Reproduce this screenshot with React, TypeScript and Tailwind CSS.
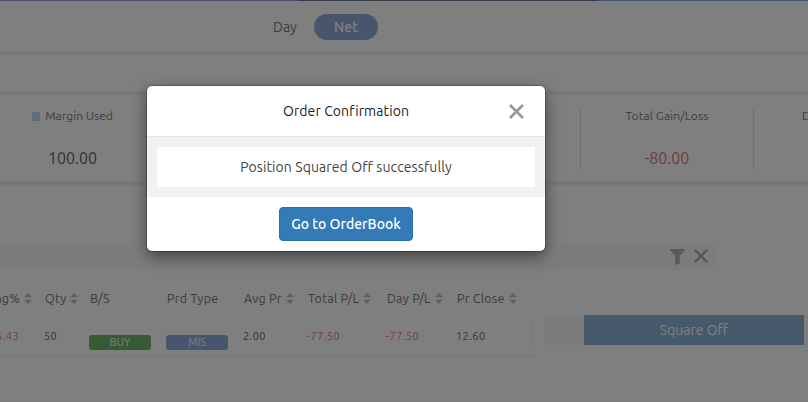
import clsx from "clsx";

type Column = {
  label: string;
  value: string;
  sortable?: boolean;
  tone?: "loss" | "buy" | "product";
};

const columns: Column[] = [
  { label: "Chng%", value: "-85.43", sortable: true, tone: "loss" },
  { label: "Qty", value: "50", sortable: true },
  { label: "B/S", value: "BUY", tone: "buy" },
  { label: "Prd Type", value: "MIS", tone: "product" },
  { label: "Avg Pr", value: "2.00", sortable: true },
  { label: "Total P/L", value: "-77.50", sortable: true, tone: "loss" },
  { label: "Day P/L", value: "-77.50", sortable: true, tone: "loss" },
  { label: "Pr Close", value: "12.60", sortable: true },
];

const tableGrid = "grid grid-cols-[45px_45px_77px_77px_64px_79px_70px_78px]";

function SortIcon() {
  return (
    <svg width="8" height="11" viewBox="0 0 8 11" className="mt-px shrink-0 fill-[#bcbcbc]">
      <path d="M4 0 8 4.2H0z" />
      <path d="M4 11 0 6.8h8z" />
    </svg>
  );
}

function Cell({ column }: { column: Column }) {
  if (column.tone === "buy" || column.tone === "product") {
    return (
      <div
        className={clsx(
          "-ml-px mt-[12px] h-[15px] w-[62px] rounded-[3px] text-center text-[11px] leading-[15px] text-white",
          column.tone === "buy" ? "bg-[#6cb468]" : "bg-[#90acda]"
        )}
      >
        {column.value}
      </div>
    );
  }
  return (
    <div
      className={clsx(
        "-ml-px pt-[5px] text-[11px] leading-4 tracking-[0.4px]",
        column.tone === "loss" ? "text-[#e07a7a]" : "text-[#6a6a6a]"
      )}
    >
      {column.value}
    </div>
  );
}

function Positions() {
  return (
    <div className="flex h-[216px] pt-[57px]">
      <div className="w-[718px] shrink-0">
        <div className="flex h-7 items-center justify-end gap-[9px] rounded-r bg-[#f8f8f8] pr-2.5">
          <svg width="15" height="16" viewBox="0 0 15 16" className="mt-px fill-[#b4b4b4]">
            <path d="M0 0h15v1.2L9.8 6.8v7.4L5.2 16V6.8L0 1.2z" />
          </svg>
          <svg width="14" height="14" viewBox="0 0 14 14" className="stroke-[#a8a8a8]" strokeWidth="2.2" fill="none">
            <path d="M.8.8l12.4 12.4M13.2.8.8 13.2" />
          </svg>
        </div>
        <div className="flex">
          <div className="w-[535px] shrink-0">
            <div className={clsx(tableGrid, "h-[53px] pt-[18px]")}>
              {columns.map((column, i) => (
                <div key={column.label} className={clsx("flex h-5 items-center gap-1", i === 0 && "w-8 justify-end")}>
                  <span className="whitespace-nowrap text-[12.5px] tracking-[0.25px] text-[#777]">{column.label}</span>
                  {column.sortable && <SortIcon />}
                </div>
              ))}
            </div>
            <div className="flex h-[33px] border-b border-[#ececec]">
              <div className={clsx(tableGrid, "w-[531px] shrink-0")}>
                {columns.map((column, i) => (
                  <div key={column.label} className={clsx(i === 0 && "flex w-[19px] justify-end")}>
                    <Cell column={column} />
                  </div>
                ))}
              </div>
              <div className="h-[25px] w-px bg-[#ececec]" />
            </div>
          </div>
          <div className="ml-[9px] mt-[45px] flex h-[30px] w-[264px] shrink-0 bg-[#f8f8f8] pl-10">
            <button className="w-[220px] rounded-[1px] bg-[#8cb4d9] text-[14px] text-white">Square Off</button>
          </div>
        </div>
      </div>
    </div>
  );
}

function Summary() {
  return (
    <div className="flex h-[86px] overflow-hidden pt-3">
      <div className="w-[145px] shrink-0 pt-px text-center">
        <div className="flex items-center justify-center gap-[5px] text-[12px] leading-4 text-[#777]">
          <span className="h-[9px] w-2 bg-[#c0d7fb]" />
          Margin Used
        </div>
        <div className="mt-[24px] text-[16px] leading-5 text-[#666]">100.00</div>
      </div>
      <div className="ml-[435px] h-[62px] w-[174px] shrink-0 border-x border-[#ddd] pt-px text-center">
        <div className="text-[12px] leading-4 tracking-[0.1px] text-[#777]">Total Gain/Loss</div>
        <div className="mt-[24px] text-[16px] leading-5 text-[#e07a7a]">-80.00</div>
      </div>
      <div className="w-[174px] shrink-0 whitespace-nowrap pl-12 pt-px text-[12px] leading-4 text-[#777]">
        Day&apos;s Gain/Loss
      </div>
    </div>
  );
}

function OrderConfirmation() {
  return (
    <div className="h-[165px] w-[398px] overflow-hidden rounded-[5px] bg-white text-center">
      <div className="flex h-[51px] items-center border-b border-[#e5e5e5] pl-9">
        <h2 className="flex-1 text-[14px] tracking-[0.1px] text-[#222]">Order Confirmation</h2>
        <button className="mr-[21px] w-[15px]" aria-label="Close">
          <svg width="15" height="15" viewBox="0 0 15 15" className="stroke-[#999]" strokeWidth="2.8" fill="none">
            <path d="M1 1l13 13M14 1 1 14" />
          </svg>
        </button>
      </div>
      <div className="bg-[#f1f1f1] p-2.5">
        <p className="h-10 bg-white text-[14px] leading-10 tracking-[0.1px] text-[#444]">
          Position Squared Off successfully
        </p>
      </div>
      <div className="flex justify-center pt-2.5">
        <button className="h-[34px] w-[134px] rounded border border-[#2e6da4] bg-[#337ab7] text-[14px] font-medium text-white">
          Go to OrderBook
        </button>
      </div>
    </div>
  );
}

export default function App() {
  return (
    <div className="relative h-[402px] w-[808px] overflow-hidden bg-white font-['Ubuntu','Noto_Sans',sans-serif]">
      <div className="flex h-px">
        <div className="w-[298px] bg-[#8ca2cf]" />
        <div className="w-[300px] bg-[#66738c]" />
        <div className="flex-1 bg-[#86a9df]" />
      </div>
      <div className="flex h-[50px] items-center pl-[273px] pt-0.5">
        <span className="w-[41px] text-[14px] text-[#777]">Day</span>
        <span className="h-[26px] w-16 rounded-full bg-[#90acda] text-center text-[14px] font-medium leading-[26px] text-white">
          Net
        </span>
      </div>
      <div className="h-1 bg-[#f1f1f1]" />
      <div className="h-9" />
      <div className="h-1 bg-[#f1f1f1]" />
      <Summary />
      <div className="h-1 bg-[#f1f1f1]" />
      <Positions />
      <div className="h-1 bg-[#f1f1f1]" />

      {/* Modal */}
      <div className="absolute inset-0 flex items-start bg-black/50 pl-[147px] pt-[86px]">
        <div className="rounded-[5px] shadow-[0_5px_15px_rgba(0,0,0,0.5),0_0_0_1px_rgba(0,0,0,0.2)]">
          <OrderConfirmation />
        </div>
      </div>
    </div>
  );
}
